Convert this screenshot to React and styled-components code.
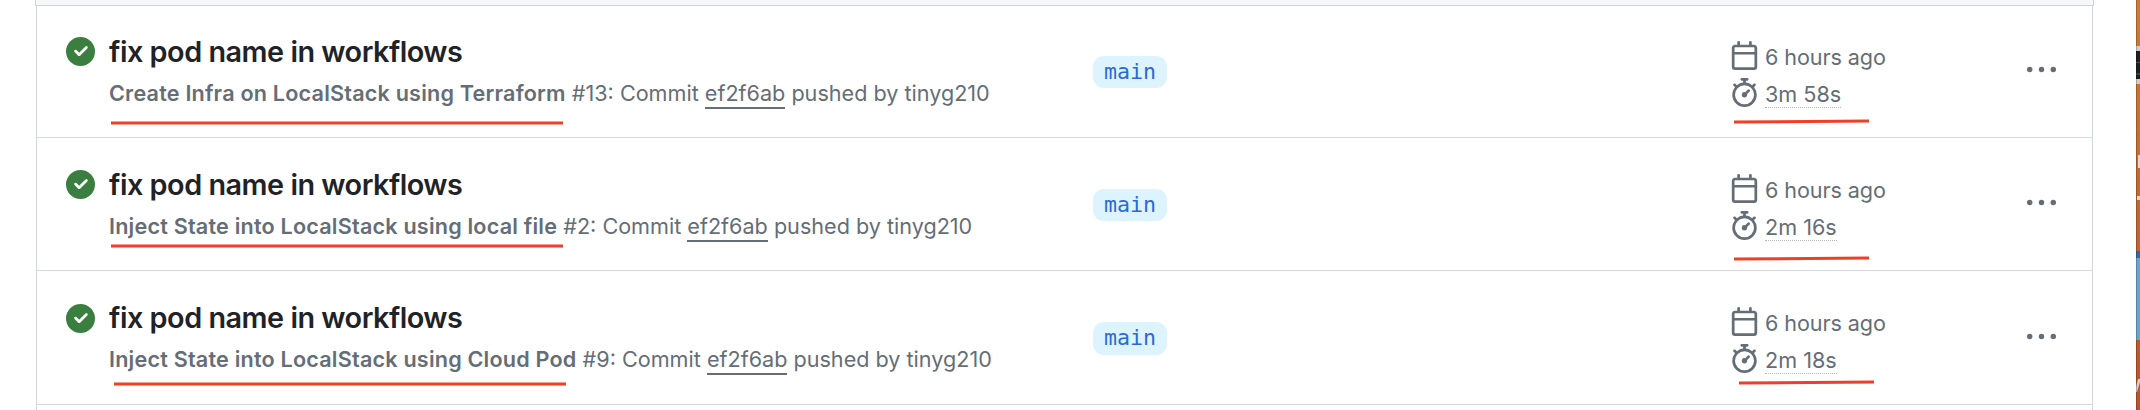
import React from "react";
import styled, { createGlobalStyle } from "styled-components";

const Global = createGlobalStyle`
  *, *::before, *::after { box-sizing: border-box; }
  body { margin: 0; background: #fff; overflow: hidden; }
`;

const Page = styled.div`
  display: flex;
  justify-content: space-between;
  height: 410px;
  overflow: hidden;
  font-family: Inter, "Liberation Sans", sans-serif;
  color: #656d76;
`;

const Panel = styled.main`
  width: 2059px;
  margin-left: 35px;
`;

const HeaderBar = styled.div`
  height: 6px;
  background: #f6f8fa;
  border: 1px solid #d0d3dc;
  border-top: 0;
`;

const RunList = styled.ul`
  list-style: none;
  margin: 0 1px;
  padding: 0;
  height: 404px;
  border: solid #d1d6dd;
  border-width: 0 1px;
`;

const RunRow = styled.li`
  position: relative;
  display: flex;
  align-items: flex-start;
  height: ${(p) => p.$height}px;
  padding-top: ${(p) => p.$inset}px;
  border-bottom: 1px solid #d6dae0;
`;

const StatusIcon = styled.svg`
  flex: none;
  width: 29px;
  height: 29px;
  margin: ${(p) => p.$top}px 14px 0 29px;
`;

const Summary = styled.div`
  width: 984px;
  padding-top: 29px;
  white-space: nowrap;
`;

const Title = styled.h3`
  margin: 0;
  font-size: 28.8px;
  line-height: 34px;
  font-weight: 600;
  letter-spacing: -0.48px;
  color: #1f2328;
`;

const Details = styled.p`
  margin: 9px 0 0;
  font-size: 21.6px;
  line-height: 30px;
`;

const Workflow = styled.strong`
  font-weight: 600;
  letter-spacing: 0.2px;
`;

const CommitLink = styled.a`
  color: inherit;
  padding-bottom: 1px;
  border-bottom: 2px solid #656d76;
`;

const BranchCell = styled.div`
  width: 637px;
  padding-top: 50px;
`;

const Branch = styled.span`
  display: block;
  width: 74px;
  height: ${(p) => p.$height}px;
  border-radius: 11px;
  background: #ddf4ff;
  color: #2a69d8;
  font: 21.6px/31px "DejaVu Sans Mono", monospace;
  text-align: center;
`;

const Timing = styled.div`
  width: 297px;
  padding-top: 35px;
`;

const TimingLine = styled.div`
  display: flex;
  align-items: flex-start;
  gap: 6px;
  height: 37px;
  font-size: 21.6px;
  line-height: 32px;
  white-space: nowrap;
`;

const Age = styled.span`
  letter-spacing: -0.1px;
`;

const Glyph = styled.svg`
  flex: none;
  width: 29px;
  height: 29px;
  fill: #656d76;
`;

const Duration = styled.span`
  height: 30px;
  border-bottom: 1px dotted #b4b9be;
`;

const MenuButton = styled.button`
  display: flex;
  margin: ${(p) => p.$top}px 0 0;
  padding: 0;
  border: 0;
  background: none;
`;

const Marker = styled.svg`
  position: absolute;
  left: ${(p) => p.$left}px;
  top: ${(p) => p.$top}px;
  overflow: visible;
  stroke: #f03f26;
  stroke-width: 3px;
`;

const DesktopEdge = styled.svg`
  flex: none;
  width: 4px;
  height: 410px;
`;

const runs = [
  { workflow: "Create Infra on LocalStack using Terraform", number: 13, duration: "3m 58s", height: 132, inset: 0, nudge: 0, mark: [74, 116.5], timeMark: [1697, 116] },
  { workflow: "Inject State into LocalStack using local file", number: 2, duration: "2m 16s", height: 133, inset: 1, nudge: 0, mark: [74, 107.5], timeMark: [1697, 121] },
  { workflow: "Inject State into LocalStack using Cloud Pod", number: 9, duration: "2m 18s", height: 134, inset: 1, nudge: 1, mark: [77, 112.5], timeMark: [1702, 112] },
];

const calendar = "M4.75 0a.75.75 0 0 1 .75.75V2h5V.75a.75.75 0 0 1 1.5 0V2h1.25c.966 0 1.75.784 1.75 1.75v10.5A1.75 1.75 0 0 1 13.25 16H2.75A1.75 1.75 0 0 1 1 14.25V3.75C1 2.784 1.784 2 2.75 2H4V.75A.75.75 0 0 1 4.75 0ZM2.5 7.5v6.75c0 .138.112.25.25.25h10.5a.25.25 0 0 0 .25-.25V7.5Zm10.75-4H2.75a.25.25 0 0 0-.25.25V6h11V3.75a.25.25 0 0 0-.25-.25Z";
const stopwatch = "M5.75.75A.75.75 0 0 1 6.5 0h3a.75.75 0 0 1 0 1.5h-.75v1l-.001.041a6.724 6.724 0 0 1 3.464 1.435l.007-.006.75-.75a.749.749 0 0 1 1.275.326.749.749 0 0 1-.215.734l-.75.75-.006.007a6.75 6.75 0 1 1-10.548 0L2.72 5.03l-.75-.75a.751.751 0 0 1 .018-1.042.751.751 0 0 1 1.042-.018l.75.75.007.006A6.72 6.72 0 0 1 7.25 2.541V1.5H6.5a.75.75 0 0 1-.75-.75ZM8 14.5a5.25 5.25 0 1 0-.001-10.501A5.25 5.25 0 0 0 8 14.5Zm.389-6.7 1.33-1.33a.75.75 0 1 1 1.061 1.06L9.45 8.861A1.503 1.503 0 0 1 8 10.75a1.499 1.499 0 1 1 .389-2.95Z";

function Run({ run }) {
  return (
    <RunRow $height={run.height} $inset={run.inset}>
      <StatusIcon $top={31 + run.nudge} viewBox="0 0 16 16">
        <circle cx="8" cy="8" r="8" fill="#3b7f40" />
        <path fill="#fff" d="M11.78 6.28a.75.75 0 0 0-1.06-1.06L7.25 8.69 5.78 7.22a.75.75 0 0 0-1.06 1.06l2 2a.75.75 0 0 0 1.06 0Z" />
      </StatusIcon>
      <Summary>
        <Title>fix pod name in workflows</Title>
        <Details>
          <Workflow>{run.workflow}</Workflow> #{run.number}: Commit{" "}
          <CommitLink>ef2f6ab</CommitLink> pushed by tinyg210
        </Details>
      </Summary>
      <BranchCell>
        <Branch $height={32 + run.nudge}>main</Branch>
      </BranchCell>
      <Timing>
        <TimingLine>
          <Glyph viewBox="0 0 16 16"><path d={calendar} /></Glyph>
          <Age>6 hours ago</Age>
        </TimingLine>
        <TimingLine>
          <Glyph viewBox="0 0 16 16"><path d={stopwatch} /></Glyph>
          <Duration>{run.duration}</Duration>
        </TimingLine>
      </Timing>
      <MenuButton aria-label="Show options" $top={49 + run.nudge}>
        <Glyph viewBox="0 0 16 16">
          <circle cx="1.5" cy="8" r="1.5" />
          <circle cx="8" cy="8" r="1.5" />
          <circle cx="14.5" cy="8" r="1.5" />
        </Glyph>
      </MenuButton>
      <Marker $left={run.mark[0]} $top={run.mark[1]} width="452" height="1"><path d="M0 0H452" /></Marker>
      <Marker $left={run.timeMark[0]} $top={run.timeMark[1]} width="135" height="1"><path d="M0 0L135 -1" /></Marker>
    </RunRow>
  );
}

export default function App() {
  return (
    <Page>
      <Global />
      <Panel>
        <HeaderBar />
        <RunList>
          {runs.map((run) => <Run key={run.number} run={run} />)}
        </RunList>
      </Panel>
      <DesktopEdge viewBox="0 0 4 410">
        <defs>
          <linearGradient id="wall" x1="0" y1="0" x2="0" y2="1">
            <stop offset="0" stopColor="#cb7d35" />
            <stop offset="1" stopColor="#b8542c" />
          </linearGradient>
        </defs>
        <rect width="4" height="410" fill="url(#wall)" />
        <rect y="46" width="4" height="38" fill="#d0cdca" />
        <rect y="51" width="4" height="28" fill="#1c2024" />
        <rect y="62" width="4" height="1" fill="#4a4f54" />
        <rect y="73" width="4" height="2" fill="#3d4247" />
        <rect x="2" y="155" width="2" height="13" fill="#dedad6" />
        <rect x="1" y="196" width="3" height="4" fill="#dedad6" />
        <rect y="251" width="4" height="7" fill="#2f68a5" />
        <rect y="258" width="4" height="82" fill="#6aa5cb" />
        <path d="M2 379H4V382L1 392H0V387Z" fill="#d5d1ce" />
        <rect width="1" height="410" fill="#000" opacity=".2" />
      </DesktopEdge>
    </Page>
  );
}
